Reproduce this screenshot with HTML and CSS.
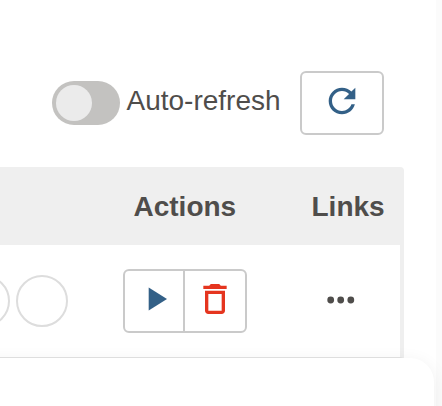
FILE: index.html
```
<!DOCTYPE html>
<html lang="en">
<head>
<meta charset="utf-8">
<title>Actions</title>
<link rel="stylesheet" href="styles.css">
</head>
<body>
<main class="page">
  <div class="toolbar">
    <span class="toggle" role="switch" aria-checked="false"><span class="knob"></span></span>
    <span class="toggle-label">Auto-refresh</span>
    <button class="button refresh" type="button">
      <svg width="40" height="40" viewBox="0 0 24 24"><path fill="#336087" d="M17.65 6.35C16.2 4.9 14.21 4 12 4c-4.42 0-7.99 3.58-7.99 8s3.57 8 7.99 8c3.73 0 6.84-2.55 7.73-6h-2.08c-.82 2.33-3.04 4-5.65 4-3.31 0-6-2.69-6-6s2.69-6 6-6c1.66 0 3.14.69 4.22 1.78L13 11h7V4l-2.35 2.35z"/></svg>
    </button>
  </div>
  <div class="table">
    <div class="head">
      <span></span>
      <span class="cell">Actions</span>
      <span class="cell links">Links</span>
    </div>
    <div class="row">
      <div class="circles"><span class="circle"></span><span class="circle"></span></div>
      <div class="group">
        <button class="action" type="button">
          <svg width="40" height="40" viewBox="0 0 40 40"><path fill="#336087" d="M14.700 8.500v23L33 20z"/></svg>
        </button>
        <button class="action" type="button">
          <svg width="40" height="40" viewBox="0 0 24 24"><path fill="#e5351f" d="M6 19c0 1.100.9 2 2 2h8c1.100 0 2-.9 2-2V7H6v12zM8 9h8v10H8V9zm7.500-5l-1-1h-5l-1 1H5v2h14V4z"/></svg>
        </button>
      </div>
      <svg class="dots" width="28" height="8" viewBox="0 0 28 8" fill="#4f4d4b"><circle cx="3.700" cy="4" r="3.400"/><circle cx="13.700" cy="4" r="3.400"/><circle cx="23.800" cy="4" r="3.400"/></svg>
    </div>
  </div>
  <div class="sheet"></div>
</main>
</body>
</html>
```
FILE: styles.css
```
* { box-sizing: border-box; }
body {
  margin: 0;
  background: #fff;
  color: #4f4d4b;
  font: 28px/32px "Liberation Sans", Arial, sans-serif;
}
.page {
  position: relative;
  height: 406px;
  overflow: hidden;
  background: linear-gradient(#fbfbfb, #fbfbfb) right / 6px 100% no-repeat;
}
.toolbar {
  display: flex;
  align-items: center;
  height: 167px;
  padding: 71px 58px 32px 52px;
}
.toggle {
  width: 68px;
  height: 44px;
  padding: 4px;
  border-radius: 22px;
  background: #c3c2c0;
}
.knob {
  display: block;
  width: 36px;
  height: 36px;
  border-radius: 50%;
  background: #ebebeb;
}
.toggle-label { margin: 0 auto 5px 6.5px; }
.button {
  display: flex;
  align-items: center;
  justify-content: center;
  width: 84px;
  height: 64px;
  padding: 0 0 4px;
  border: 2px solid #cacaca;
  border-radius: 6px;
  background: #fff;
}
.table {
  width: 404px;
  height: 191px;
  border-right: 4px solid #efefef;
  border-bottom: 1px solid #e3e3e3;
  border-top-right-radius: 4px;
}
.head, .row {
  display: grid;
  grid-template-columns: 123px 188.5px 88.5px;
  align-items: center;
}
.head {
  height: 78px;
  padding-top: 2px;
  background: #efefef;
  font-weight: bold;
}
.cell { padding-left: 10.5px; }
.links { padding-left: 0; }
.row { height: 112px; }
.circles {
  display: flex;
  gap: 6px;
  margin-left: -42px;
}
.circle {
  flex: none;
  width: 52px;
  height: 52px;
  border: 2px solid #ddd;
  border-radius: 50%;
}
.group {
  display: flex;
  width: 124px;
  height: 64px;
  border: 2px solid #cacaca;
  border-radius: 6px;
}
.action {
  display: flex;
  align-items: center;
  justify-content: center;
  width: 58px;
  padding: 0 0 4px;
  border: 0;
  background: none;
}
.action + .action {
  width: 62px;
  border-left: 2px solid #cacaca;
}
.action svg { flex: none; }
.dots { margin: -2px 0 0 15.5px; }
.sheet {
  position: absolute;
  left: -40px;
  top: 358px;
  width: 474px;
  height: 90px;
  border-radius: 24px;
  background: #fff;
  box-shadow: 0 4px 18px rgba(0, 0, 0, .07);
}
```
